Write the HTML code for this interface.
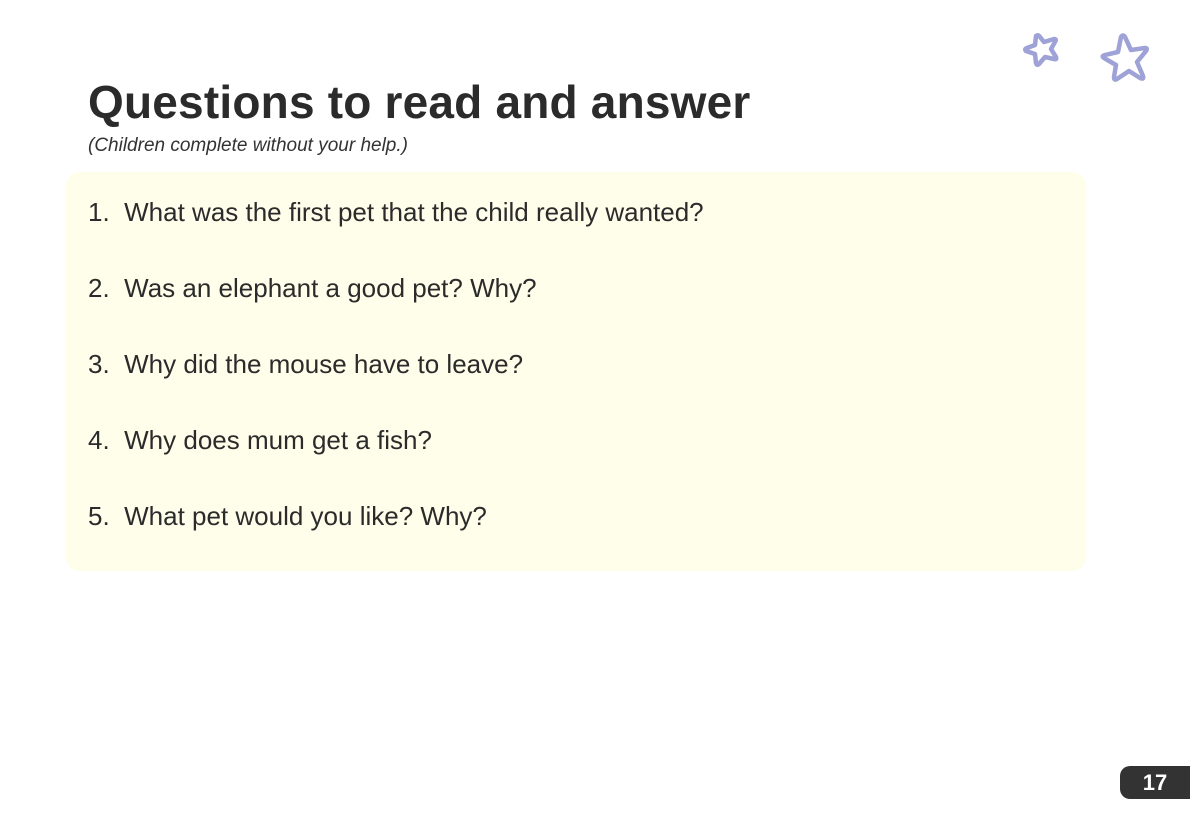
<!DOCTYPE html>
<html><head><style>
body{margin:0;width:1190px;height:839px;background:#fff;position:relative;overflow:hidden;font-family:"Liberation Sans",sans-serif;color:#2b2b2b}
h1{position:absolute;left:88px;top:75px;margin:0;font-size:46px;font-weight:bold;letter-spacing:0.2px;white-space:nowrap}
.sub{position:absolute;left:88px;top:135px;font-size:19px;font-style:italic;color:#333}
.box{position:absolute;left:66px;top:172px;width:1020px;height:399px;background:#fffeea;border-radius:14px}
.q{position:absolute;left:88px;font-size:26px;white-space:nowrap;color:#2b2b2b}
.pg{position:absolute;left:1120px;top:766px;width:70px;height:33px;background:#333;border-radius:10px 0 0 10px;color:#fff;font-weight:bold;font-size:22px;line-height:33px;text-align:center}
</style></head><body>
<svg style="position:absolute;left:1010px;top:20px" width="160" height="80" viewBox="0 0 160 80">
<g fill="none" stroke="#9ea2d6" stroke-width="4.5" stroke-linejoin="round" stroke-linecap="round">
<path d="M26 16 Q28 14 30 17 L34 22 L44 19 Q47 19 45 22 L41 29 L46 37 Q47 40 44 39 L35 37 L29 44 Q27 46 26 43 L25 34 L16 31 Q14 29 17 28 L25 25 Z"/>
<path d="M111 17 Q113 14 115 17 L121 30 L135 28 Q138 28 136 31 L127 42 L133 56 Q134 60 130 58 L119 51 L107 59 Q104 61 104 57 L106 45 L94 38 Q91 36 95 35 L108 32 Z"/>
</g></svg>
<h1>Questions to read and answer</h1>
<div class="sub">(Children complete without your help.)</div>
<div class="box"></div>
<div class="q" style="top:197px">1.&nbsp; What was the first pet that the child really wanted?</div>
<div class="q" style="top:273px">2.&nbsp; Was an elephant a good pet? Why?</div>
<div class="q" style="top:349px">3.&nbsp; Why did the mouse have to leave?</div>
<div class="q" style="top:425px">4.&nbsp; Why does mum get a fish?</div>
<div class="q" style="top:501px">5.&nbsp; What pet would you like? Why?</div>
<div class="pg">17</div>
</body></html>
